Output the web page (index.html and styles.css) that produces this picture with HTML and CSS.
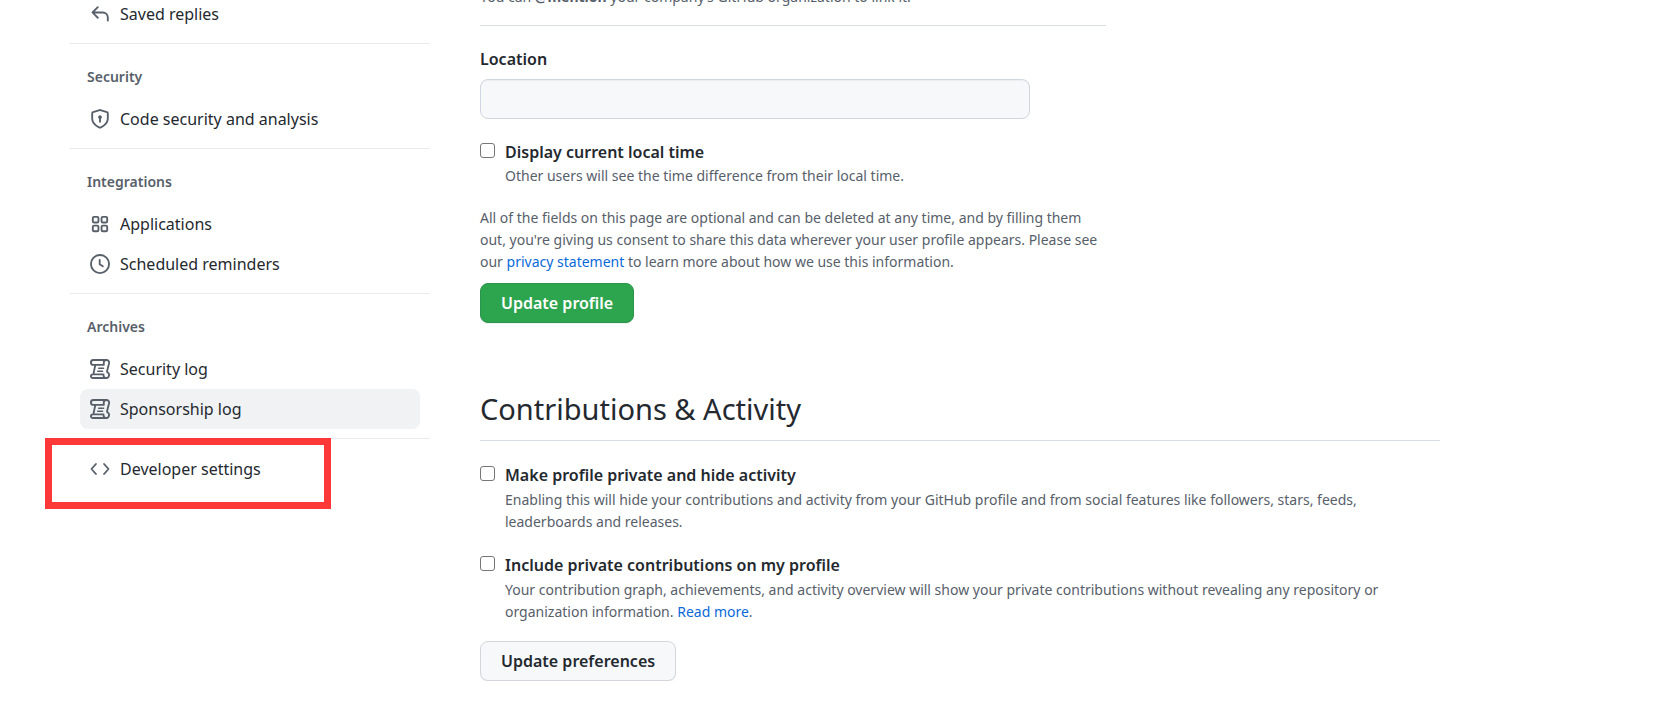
FILE: index.html
```html
<!DOCTYPE html>
<html lang="en">
<head>
<meta charset="utf-8">
<title>Your profile</title>
<link rel="stylesheet" href="styles.css">
</head>
<body>
<svg class="sprite" aria-hidden="true">
  <symbol id="log" viewBox="0 0 16 16"><g fill="none" stroke="currentColor" stroke-width="1.5" stroke-linecap="round" stroke-linejoin="round"><path d="M11 4.700V2.800a2 2 0 0 1 2-2H2.700C.1.8.1 4.700 2.700 4.700H11M13 .8c1.800 0 2.500 1.200 2.200 2.800l-1.500 5.900c-.2.9.1 1.200.7 1.500 1.300.7 1.200 4.200-1.200 4.200H2.300c-2.100 0-2-2.900 0-2.900h8.500c-.1 1.600.6 2.900 2.400 2.900M4.300 4.700 2.700 12.100"/><path stroke-width="1.300" d="M7 7.400h3.800M6.200 9.800H10"/></g></symbol>
</svg>
<div class="page">
  <nav class="sidebar" aria-label="Settings">
    <ul class="nav-group">
      <li><a class="nav-item" href="#replies"><svg class="icon" viewBox="0 0 16 16"><path d="M6.780 1.970a.750.750 0 0 1 0 1.060L3.810 6h6.440A4.750 4.750 0 0 1 15 10.750v2.500a.750.750 0 0 1-1.500 0v-2.500a3.250 3.250 0 0 0-3.250-3.250H3.810l2.970 2.970a.750.750 0 0 1-1.060 1.060L1.470 7.280a.750.750 0 0 1 0-1.060l4.250-4.250a.750.750 0 0 1 1.060 0Z"/></svg>Saved replies</a></li>
    </ul>
    <h3 class="nav-heading">Security</h3>
    <ul class="nav-group">
      <li><a class="nav-item" href="#security"><svg class="icon" viewBox="0 0 16 16"><path fill-rule="evenodd" d="m8.533.133 5.250 1.680A1.750 1.750 0 0 1 15 3.480V7c0 1.566-.320 3.182-1.303 4.682-.983 1.498-2.585 2.813-5.032 3.855a1.697 1.697 0 0 1-1.330 0c-2.447-1.042-4.049-2.357-5.032-3.855C1.320 10.182 1 8.566 1 7V3.480a1.750 1.750 0 0 1 1.217-1.667l5.250-1.680a1.748 1.748 0 0 1 1.066 0Zm-.610 1.430-5.250 1.680a.251.251 0 0 0-.174.237V7c0 1.360.275 2.666 1.057 3.859.784 1.194 2.121 2.342 4.366 3.298a.196.196 0 0 0 .154 0c2.245-.957 3.582-2.103 4.366-3.297C13.225 9.666 13.500 8.358 13.500 7V3.480a.250.250 0 0 0-.174-.238l-5.250-1.680a.250.250 0 0 0-.153 0ZM9.500 6.500c0 .536-.286 1.032-.750 1.300v2.450a.750.750 0 0 1-1.500 0V7.800A1.500 1.500 0 1 1 9.500 6.500Z"/></svg>Code security and analysis</a></li>
    </ul>
    <h3 class="nav-heading">Integrations</h3>
    <ul class="nav-group">
      <li><a class="nav-item" href="#applications"><svg class="icon icon-line" viewBox="0 0 16 16"><rect x="2.250" y="2.250" width="4.500" height="4.500" rx="1"/><rect x="9.250" y="2.250" width="4.500" height="4.500" rx="1"/><rect x="2.250" y="9.250" width="4.500" height="4.500" rx="1"/><rect x="9.250" y="9.250" width="4.500" height="4.500" rx="1"/></svg>Applications</a></li>
      <li><a class="nav-item" href="#reminders"><svg class="icon icon-line" viewBox="0 0 16 16"><circle cx="8" cy="8" r="7.250"/><path d="M7.750 4.750v3.500l2.500 1.500"/></svg>Scheduled reminders</a></li>
    </ul>
    <h3 class="nav-heading">Archives</h3>
    <ul class="nav-group">
      <li><a class="nav-item" href="#security-log"><svg class="icon"><use href="#log"/></svg>Security log</a></li>
      <li><a class="nav-item nav-item-active" href="#sponsorship-log"><svg class="icon"><use href="#log"/></svg>Sponsorship log</a></li>
    </ul>
    <ul class="nav-group nav-group-last">
      <li class="highlighted"><a class="nav-item" href="#developer"><svg class="icon icon-line" viewBox="0 0 16 16"><path d="M4.750 4 1.200 8l3.550 4M11.250 4l3.550 4-3.550 4"/></svg>Developer settings</a></li>
    </ul>
  </nav>
  <main class="content">
    <form class="profile">
      <p class="hint">You can <strong>@mention</strong> your company’s GitHub organization to link it.</p>
      <div class="field">
        <label class="label" for="location">Location</label>
        <input class="text-input" id="location" type="text">
      </div>
      <div class="check">
        <input class="checkbox" type="checkbox" id="local-time">
        <div><label class="label" for="local-time">Display current local time</label>
        <p class="note">Other users will see the time difference from their local time.</p></div>
      </div>
      <p class="note consent">All of the fields on this page are optional and can be deleted at any time, and by filling them out, you're giving us consent to share this data wherever your user profile appears. Please see our <a href="#privacy">privacy statement</a> to learn more about how we use this information.</p>
      <button class="button button-primary" type="button">Update profile</button>
    </form>
    <form class="activity">
      <h2 class="title">Contributions &amp; Activity</h2>
      <div class="check">
        <input class="checkbox" type="checkbox" id="private-profile">
        <div><label class="label" for="private-profile">Make profile private and hide activity</label>
        <p class="note">Enabling this will hide your contributions and activity from your GitHub profile and from social features like followers, stars, feeds, leaderboards and releases.</p></div>
      </div>
      <div class="check">
        <input class="checkbox" type="checkbox" id="private-contributions">
        <div><label class="label" for="private-contributions">Include private contributions on my profile</label>
        <p class="note">Your contribution graph, achievements, and activity overview will show your private contributions without revealing any repository or organization information. <a href="#more">Read more</a>.</p></div>
      </div>
      <button class="button" type="button">Update preferences</button>
    </form>
  </main>
</div>
</body>
</html>
```
FILE: styles.css
```css
* { box-sizing: border-box; }
body {
  margin: 0;
  overflow: hidden;
  background: #fff;
  color: #24292f;
  font-family: "Noto Sans", "Open Sans", sans-serif;
  font-size: 16px;
  line-height: 26px;
}
h2, h3, p, ul { margin: 0; padding: 0; }
ul { list-style: none; }
a { color: #0969da; text-decoration: none; }
.sprite { display: none; }
.page {
  display: grid;
  grid-template-columns: 360px minmax(0, 960px);
  column-gap: 50px;
  padding: 0 70px;
}
.sidebar { margin-top: -6px; }
.nav-group { padding: 0 10px 9px; border-bottom: 1px solid #e8eaed; }
.nav-group-last { padding-top: 10px; border-bottom: 0; }
.nav-heading {
  padding: 22px 17px 11px;
  color: #57606a;
  font-size: 14px;
  font-weight: 600;
  line-height: 22px;
}
.nav-item {
  display: flex;
  align-items: center;
  gap: 10px;
  height: 40px;
  padding: 0 10px;
  border-radius: 8px;
  color: #24292f;
}
.nav-item-active { background: #f0f2f4; }
.icon { flex: none; width: 20px; height: 20px; color: #57606a; fill: currentColor; }
.icon-line { fill: none; stroke: currentColor; stroke-width: 1.5; stroke-linecap: round; stroke-linejoin: round; }
.highlighted { position: relative; }
.highlighted::after {
  content: "";
  position: absolute;
  inset: -11px 89px -20px -35px;
  border: 7px solid #fd3838;
  pointer-events: none;
}
.profile { max-width: 626px; margin-top: -14px; }
.hint { padding-bottom: 17px; border-bottom: 1px solid #d8dee4; color: #57606a; font-size: 14px; line-height: 22px; }
.field { display: flex; flex-direction: column; gap: 7px; padding-top: 20px; }
.label { display: block; font-weight: 600; }
.text-input {
  width: 100%;
  max-width: 550px;
  height: 40px;
  padding: 0 15px;
  border: 1px solid #d0d7de;
  border-radius: 8px;
  background: #f6f8fa;
  box-shadow: inset 0 1px 0 #eceff2;
  font: inherit;
}
.check { display: flex; align-items: flex-start; gap: 10px; margin-top: 20px; }
.checkbox {
  appearance: none;
  flex: none;
  width: 15px;
  height: 15px;
  margin: 4px 0 0;
  border: 1px solid #767676;
  border-radius: 3px;
  background: #fff;
}
.checkbox:checked { background: #0969da; }
.note { color: #57606a; font-size: 14px; line-height: 22px; }
.consent { margin: 20px 0 10px; padding-right: 8px; }
.button {
  height: 40px;
  padding: 0 20px;
  border: 1px solid #d3d7db;
  border-radius: 8px;
  background: #f6f8fa;
  box-shadow: 0 1px 0 #f0f1f2;
  color: #24292f;
  font: inherit;
  font-weight: 600;
}
.button-primary { border-color: #2a944a; background: #2da44e; color: #fff; }
.activity { margin-top: 64px; }
.title { padding-bottom: 10px; border-bottom: 1px solid #d8dee4; font-size: 29px; font-weight: 400; line-height: 43px; }
.activity .check { margin-top: 21px; }
.activity .check + .check { margin-top: 19px; }
.activity .note { margin-top: 1px; }
.activity .button { margin-top: 18px; }
```
